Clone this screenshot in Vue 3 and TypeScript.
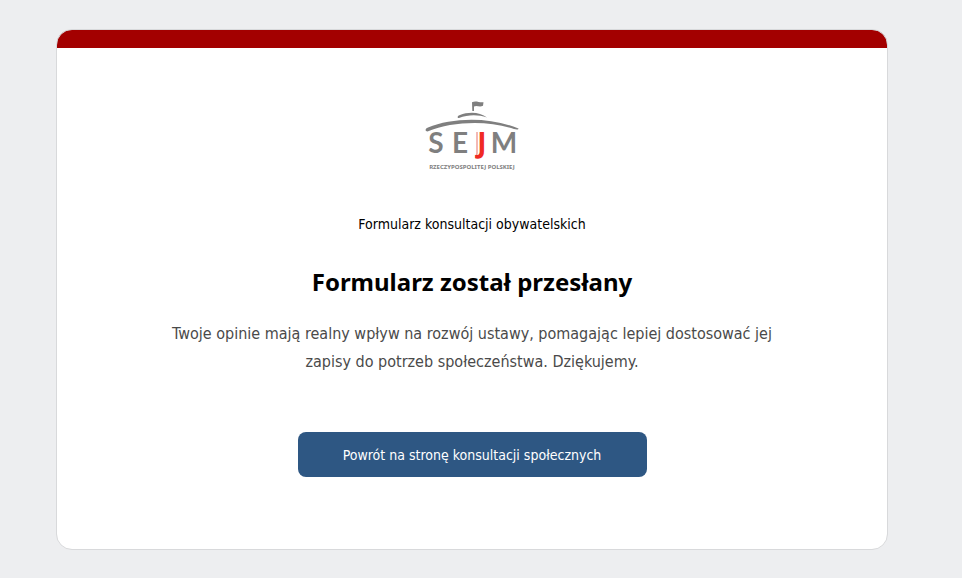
<script setup lang="ts">
const formName: string = 'Formularz konsultacji obywatelskich'
const heading: string = 'Formularz został przesłany'
const message: string =
  'Twoje opinie mają realny wpływ na rozwój ustawy, pomagając lepiej dostosować jej zapisy do potrzeb społeczeństwa. Dziękujemy.'
const backLabel: string = 'Powrót na stronę konsultacji społecznych'
</script>

<template>
  <main class="page">
    <section class="card">
      <svg class="logo" width="96" height="72" viewBox="0 0 96 72" role="img" aria-label="Sejm Rzeczypospolitej Polskiej">
        <g fill="#7f7f7f">
          <path d="M2 31 C1 30 2 28 4 27.500 C28 17.500 66 16.500 94.500 28.500 C94.500 30 92 29.500 90 29 C65 20.500 29 21 3.500 31.500 Z" />
          <path d="M34 18 C33 17 34 15.500 36 15 C44 11.500 56 11.500 63 17.500 C54 14.300 44 14.500 35 18 Z" />
          <path d="M48 2.300 C52 .5 55 2.800 59.500 2.300 L59 5.800 C55 7.500 53 4.800 50 6.500 L50 11 L48.300 11 Z" />
        </g>
        <path d="M53 32 L53 53 Q53 56 51.500 58" fill="none" stroke="#f0a09b" stroke-width="1.500" />
        <g class="letters">
          <text x="12" y="53">S</text>
          <text x="36" y="53">E</text>
          <text class="accent" x="58" y="53">J</text>
          <text x="80" y="53">M</text>
        </g>
        <text class="motto" x="48" y="69">RZECZYPOSPOLITEJ POLSKIEJ</text>
      </svg>
      <p class="form-name">{{ formName }}</p>
      <h1 class="heading">{{ heading }}</h1>
      <p class="message">{{ message }}</p>
      <a class="back" href="#">{{ backLabel }}</a>
    </section>
  </main>
</template>

<style>
body {
  background: #edeef0;
}
</style>

<style scoped>
.page {
  box-sizing: border-box;
  padding: 29px 74px 28px 56px;
  font-family: Tahoma, "DejaVu Sans Condensed", "Noto Sans", sans-serif;
}

.card {
  display: flex;
  flex-direction: column;
  align-items: center;
  padding: 70px 100px 72px;
  overflow: hidden;
  border: 1px solid #d8d9db;
  border-radius: 16px;
  background: linear-gradient(#a30000 18px, #fff 18px);
  text-align: center;
}

.logo {
  display: block;
}

.letters {
  font-family: Lato, "Noto Sans", sans-serif;
  font-size: 28px;
  font-weight: 700;
  fill: #7f7f7f;
  text-anchor: middle;
}

.letters .accent {
  font-family: "Noto Sans", sans-serif;
  fill: #f02a24;
}

.motto {
  font-family: "Noto Sans", sans-serif;
  font-size: 6px;
  font-weight: 700;
  fill: #7f7f7f;
  text-anchor: middle;
}

.form-name {
  margin: 42px 0 0;
  color: #000;
  font-size: 14px;
  line-height: 20px;
}

.heading {
  margin: 31px 0 0;
  color: #000;
  font-family: Tahoma, "Noto Sans", sans-serif;
  font-size: 24px;
  font-weight: 700;
  line-height: 34px;
}

.message {
  max-width: 620px;
  margin: 21px 0 0;
  color: #4a4a4a;
  font-size: 16px;
  line-height: 28px;
}

.back {
  box-sizing: border-box;
  width: 349px;
  max-width: 100%;
  margin-top: 56px;
  padding: 13px 20px 12px;
  border-radius: 8px;
  background: #2e5783;
  color: #fff;
  font-size: 14px;
  line-height: 20px;
  text-decoration: none;
}
</style>
